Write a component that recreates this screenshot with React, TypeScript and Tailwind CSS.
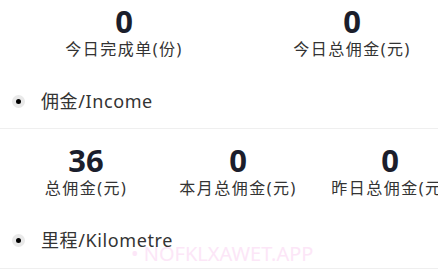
import React from 'react';

const font = { fontFamily: '"Noto Sans", "Noto Sans CJK SC", sans-serif' };

function Stat({ value, label }: { value: string; label: string }) {
    return (
        <div className="flex flex-col items-center">
            <div className="text-[31px] font-bold leading-[34px] text-[#1b1e2c]">{value}</div>
            <div className="whitespace-nowrap text-[16px] leading-[22px] tracking-[1.5px] text-[#333]">{label}</div>
        </div>
    );
}

function SectionTitle({ title }: { title: string }) {
    return (
        <div className="flex items-center pl-[12px]">
            <span className="flex h-[13px] w-[13px] items-center justify-center rounded-full bg-[#e9e9e9]">
                <span className="h-[5px] w-[5px] rounded-full bg-black" />
            </span>
            <span className="ml-[16px] text-[18px] leading-[24px] tracking-[0.6px] text-[#333]">{title}</span>
        </div>
    );
}

export default function App() {
    return (
        <div className="relative h-[277px] w-[438px] overflow-hidden bg-white" style={font}>
            <div className="ml-[10px] grid w-[456px] grid-cols-2 pt-[4px]">
                <Stat value="0" label="今日完成单(份)" />
                <Stat value="0" label="今日总佣金(元)" />
            </div>

            <div className="pt-[29px] pb-[15px]">
                <SectionTitle title="佣金/Income" />
            </div>
            <div className="h-px bg-[#efefef]" />

            <div className="ml-[10px] grid w-[456px] grid-cols-3 pt-[14px]">
                <Stat value="36" label="总佣金(元)" />
                <Stat value="0" label="本月总佣金(元)" />
                <Stat value="0" label="昨日总佣金(元)" />
            </div>

            <div className="pt-[29px] pb-[16px]">
                <SectionTitle title="里程/Kilometre" />
            </div>
            <div className="h-px bg-[#efefef]" />

            <div className="pointer-events-none absolute left-[131px] top-[244px] whitespace-nowrap text-[20px] leading-[20px] text-[#fce6f7]">
                • NOFKLXAWET.APP
            </div>
        </div>
    );
}
